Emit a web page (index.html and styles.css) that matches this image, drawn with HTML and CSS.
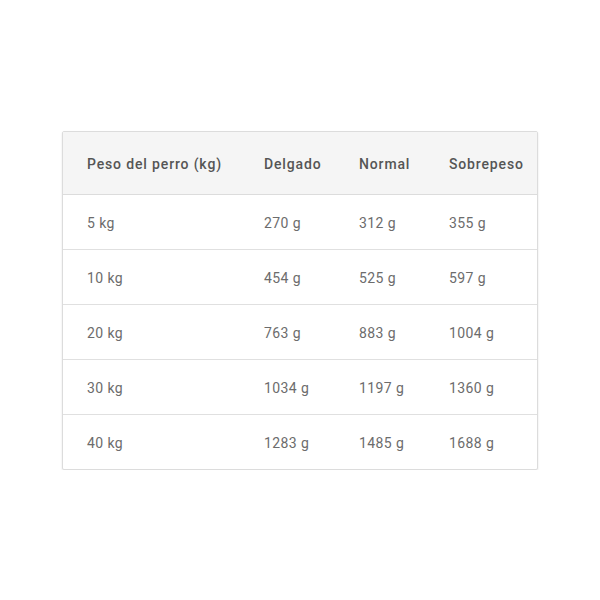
FILE: index.html
```html
<!DOCTYPE html>
<html>
<head>
<meta charset="utf-8">
<link rel="stylesheet" href="styles.css">
</head>
<body>
<div class="card">
  <table class="tbl">
    <colgroup>
      <col class="c1"><col class="c2"><col class="c3"><col class="c4">
    </colgroup>
    <thead>
      <tr><th>Peso del perro (kg)</th><th>Delgado</th><th>Normal</th><th>Sobrepeso</th></tr>
    </thead>
    <tbody>
      <tr><td>5 kg</td><td>270 g</td><td>312 g</td><td>355 g</td></tr>
      <tr><td>10 kg</td><td>454 g</td><td>525 g</td><td>597 g</td></tr>
      <tr><td>20 kg</td><td>763 g</td><td>883 g</td><td>1004 g</td></tr>
      <tr><td>30 kg</td><td>1034 g</td><td>1197 g</td><td>1360 g</td></tr>
      <tr><td>40 kg</td><td>1283 g</td><td>1485 g</td><td>1688 g</td></tr>
    </tbody>
  </table>
</div>
</body>
</html>
```
FILE: styles.css
```css
html, body { margin: 0; padding: 0; background: #fff; }
body { padding: 131px 0 0 62px; font-family: Roboto, "Liberation Sans", sans-serif; }
.card {
  width: 474px;
  border: 1px solid #dcdcdc;
  border-radius: 2px;
  box-shadow: 0 1px 2px rgba(0,0,0,0.12);
  overflow: hidden;
}
.tbl { width: 100%; border-collapse: collapse; table-layout: fixed; }
.c1 { width: 177px; }
.c2 { width: 95px; }
.c3 { width: 90px; }
.c4 { width: auto; }
.tbl th, .tbl td {
  text-align: left;
  padding: 0 0 0 24px;
  font-size: 14px;
  white-space: nowrap;
}
.tbl th {
  height: 62px;
  padding-top: 2px;
  box-sizing: border-box;
  background: #f5f5f5;
  color: #555;
  font-weight: 500;
  letter-spacing: 0.85px;
  border-bottom: 1px solid #dcdcdc;
}
.tbl td {
  height: 51px;
  padding-top: 3px;
  color: #6c6c6c;
  font-weight: 400;
  letter-spacing: 0.4px;
  border-top: 1px solid #e0e0e0;
}
.tbl tbody tr:first-child td { border-top: none; }
```
